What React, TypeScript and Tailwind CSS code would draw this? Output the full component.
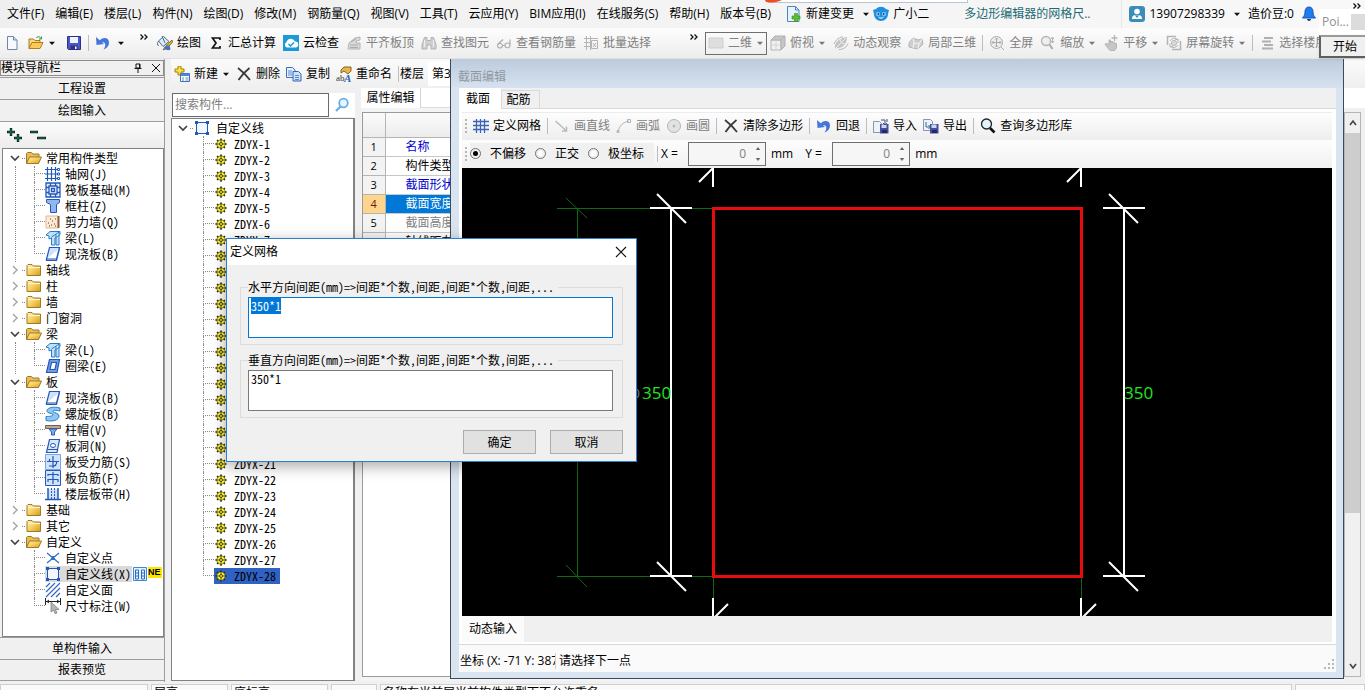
import { useEffect, useRef } from "react";
import type { ReactNode } from "react";

const UI_FONT = "font-['Open_Sans','Noto_Sans_CJK_SC',sans-serif]";
const CODE_FONT = "font-['Noto_Sans_Mono_CJK_SC','Noto_Sans_CJK_SC',monospace]";

/* ---------- icons (16 x 16) ---------- */

const G = "#b4b4b4";
const B = "#2458b8";

const icons: Record<string, ReactNode> = {
  newFile: (
    <>
      <path d="M3.500 1.500h6l3.500 3.500v9.500h-9.500z" fill="#f6faff" stroke="#6f86a8" />
      <path d="M9.500 1.500v3.500h3.500" fill="#c9d8ee" stroke="#6f86a8" />
    </>
  ),
  open: (
    <>
      <path d="M1 13.500V4h4.500l1.500 1.500h5V8" fill="#f7d77c" stroke="#a87a1c" />
      <path d="M1 13.500 4 7.500h11l-3 6z" fill="#ffc95a" stroke="#b07f1c" />
      <path d="M8 3c2-2 4-1.500 5 .5m.5-2v2.500H11" fill="none" stroke="#3c8b3c" />
    </>
  ),
  save: (
    <>
      <path d="M1.500 1.500h13v13h-12l-1-1z" fill="#4d57c4" stroke="#2b3286" />
      <path d="M4 2h8v6H4z" fill="#eef2ff" />
      <path d="M4.500 10.500h7v4h-7z" fill="#2d3380" />
      <path d="M9 11.500h1.500v2.500H9z" fill="#fff" />
    </>
  ),
  undo: (
    <>
      <path d="M4 6.500C7 1.500 14 2 14 7.500c0 3.500-2.500 6-5.500 7C10.500 12 11 8.500 9 7.500 7.500 7 6.500 7.500 6 8.500z" fill="#4676d8" />
      <path d="M1 2 1.500 10l7.500-1z" fill="#4676d8" />
    </>
  ),
  paint: (
    <>
      <path d="m1.500 6 5-4.500 5.500 5-6 5z" fill="#dfeaf7" stroke="#4a6d92" />
      <path d="M1.500 6c-1.500 2-1 4 0 5M5 1l3 7" stroke="#4a6d92" fill="none" />
      <path d="M15 5 9 10.500l-3 4.500 4.500-2L15.500 7z" fill="#e2b53d" stroke="#8a6b1c" />
      <path d="M11 10c2 1 3 3 2 5-3 .5-5-.5-6-2" fill="#3e72cf" />
    </>
  ),
  sigma: <path d="M12 5V3H4.500L8 8l-3.500 5H12v-2" fill="none" stroke="#111" strokeWidth="1.700" />,
  cloudCheck: (
    <>
      <path d="M0 0h16v16H0z" fill="#1b9ad6" />
      <path d="M4 12.500a3 3 0 0 1-.5-5.500A4.500 4.500 0 0 1 12 6.500a3 3 0 0 1 .5 6z" fill="#fff" />
      <path d="m5.500 9 2 2L11 7.500" fill="none" stroke="#1b9ad6" strokeWidth="1.500" />
    </>
  ),
  align: (
    <>
      <path d="M3 8 9 3l5-1v3l-4 1v2h4v6H2z" fill="#dadada" stroke={G} />
      <path d="M4 10h8M4 12.500h8M5 7l5-3" stroke="#aaa" />
    </>
  ),
  binoc: (
    <>
      <path d="M3.500 2.500h2.500v3h4v-3h2.500l2.500 7v4.500h-5v-4H6v4H1v-4.500z" fill="#cfcfcf" stroke="#b2b2b2" />
      <path d="M3.500 5v7M12.500 5v7" stroke="#eee" />
    </>
  ),
  glasses: (
    <path d="M7 4.500 2 9a2.500 2.500 0 1 0 4.500 1.500A2.500 2.500 0 0 0 2 9.500M6.500 10.500h2.500m5-6v6.500M9 10a2.500 2.500 0 1 0 5 .5 2.500 2.500 0 0 0-5 0" fill="none" stroke="#adadad" strokeWidth="1.200" />
  ),
  batch: (
    <path d="M1 3.500h14M1 7.500h7M1 11.500h6M3.500 1v14M7.500 1v14M8.500 5.500h6v8h-6zM10 8l3 4m0-4-3 4" fill="none" stroke={G} />
  ),
  rect2d: <path d="M1 3h14v10H1z" fill="#dedede" stroke="#cfcfcf" />,
  cube: (
    <>
      <path d="M1 5h10v10H1z" fill="#f1f1f1" stroke={G} />
      <path d="m1 5 4-4h10l-4 4zM11 5v10l4-4V1z" fill="#c6c6c6" stroke="#b0b0b0" />
      <path d="M6 5v10M1 10h10" stroke="#d2d2d2" />
    </>
  ),
  orbit: (
    <>
      <path d="M2 13C1 8 6 3 14 2c0 7-4 12-12 11z" fill="#c4c4c4" />
      <path d="M1 15 13 3M7 4c0 3 2 5 5 5" stroke="#eee" fill="none" />
      <path d="M1 9c2-5 6-7 9-7M6 14.500c5 0 8-3 9-6" stroke={G} fill="none" />
    </>
  ),
  part3d: (
    <>
      <path d="m1 8 4-5 5 2 4-1 1 5-5 5-5-1-4-1z" fill="#d0d0d0" stroke={G} />
      <path d="m5 3 1 5 5 1 3-5M6 8l-1 5m6-4-1 5" stroke="#f4f4f4" fill="none" />
    </>
  ),
  full: (
    <>
      <circle cx="7.500" cy="7.500" r="6" fill="#eee" stroke="#aaa" />
      <path d="M7.500 3v9M3 7.500h9M6 4.500 7.500 3 9 4.500M6 10.500 7.500 12 9 10.500M4.500 6 3 7.500 4.500 9M10.500 6 12 7.500 10.500 9m1.500 3 3 3" fill="none" stroke="#aaa" />
    </>
  ),
  zoomer: (
    <>
      <circle cx="6" cy="6" r="4.500" fill="#eee" stroke={G} strokeWidth="1.300" />
      <path d="m9.500 9.500 3 4.500" stroke="#aaa" strokeWidth="2" />
      <path d="M12.500 2v6m-1.500-4 1.500-2L14 4m-3 2 1.500 2L14 6" stroke={G} fill="none" />
    </>
  ),
  pan: (
    <>
      <path d="M2 9c2-1 3 0 4 1V5h1.500v3L9 6l1 2 1.500-1 .5 2 1.500-.5V13l-2 2.500H7L4 12z" fill="#c6c6c6" stroke={G} />
      <path d="M11.500 0v6M8.500 3h6" stroke={G} strokeWidth="1.300" />
    </>
  ),
  rotate: (
    <>
      <path d="M1.500 10V1.500H10M6 14.500h8.500V6" fill="none" stroke={G} strokeWidth="1.500" />
      <circle cx="8" cy="8" r="2.500" fill="#ddd" stroke={G} />
      <path d="M4 11a5 5 0 0 0 8-1M12 5a5 5 0 0 0-8 1m0 2.500V12l3-1M12 8V4L9 5" fill="none" stroke={G} />
    </>
  ),
  floors: <path d="M5 3h9M3 6.500h9M5 10h9M3 13.500h11" stroke="#b0b0b0" strokeWidth="2" />,
  newItem: (
    <>
      <path d="M4 0h3v3h3v3H7v3H4V6H1V3h3z" fill="#ffe14a" stroke="#a08200" />
      <path d="M6.500 7.500h9v8h-9z" fill="#fff" stroke="#3f6fb5" />
      <path d="M6.500 7.500h9v2.500h-9z" fill="#4f86d6" />
      <path d="M8 12h2m1.500 0h3M8 14h2m1.500 0h3" stroke="#5b88c8" />
    </>
  ),
  cross: <path d="M2 2c4 3 8 7 12 12M13.500 2C9 5.500 5.500 9.500 2.500 14" fill="none" stroke="#3a3a3a" strokeWidth="1.800" />,
  copy: (
    <>
      <path d="M.5 1.500h6l2.500 2.500v7.500h-8.500z" fill="#e6f0ff" stroke="#3f6fc0" />
      <path d="M7 5.500h5.500l2.500 2.500v7H7z" fill="#cfe1fb" stroke="#3563b5" />
      <path d="M2 5h4M2 7h4M2 9h4M9 9.500h4M9 11.500h4M9 13.500h4" stroke="#5b8ad4" />
    </>
  ),
  rename: (
    <>
      <path d="M5 4 8 1h7v4l-3 3-4-3-3 2z" fill="#e3b64f" stroke="#8a6418" />
      <text x="0" y="15" fontSize="9" fontFamily="Liberation Serif" fill="#333">ab</text>
      <text x="8" y="15.500" fontSize="11" fontFamily="Liberation Serif" fontStyle="italic" fontWeight="bold" fill="#2f62c8">A</text>
    </>
  ),
  search: (
    <>
      <circle cx="9.500" cy="6" r="4.300" fill="#e8f5ff" stroke="#6aaee6" strokeWidth="1.800" />
      <path d="m6.500 9.500-4.500 4.500" stroke="#6aaee6" strokeWidth="2.300" />
    </>
  ),
  grid: <path d="M0 3.500h16M0 7.500h16M0 11.500h16M3.500 1v14M7.500 1v14M11.500 1v14" stroke="#3a66b4" strokeWidth="1.300" />,
  axis: (
    <>
      <path d="M0 3.500h12M0 8h12M0 12.500h12M2.500 1v14M6.500 1v14M10.500 1v14" stroke={B} strokeWidth="1.200" />
      <path d="M12.500 2.500h2v2h-2zM12.500 7h2v2h-2zM12.500 11.500h2v2h-2z" fill="#fff" stroke={B} />
    </>
  ),
  line: <path d="m1.500 3 11 10m0-4.500V13H8" fill="none" stroke="#bbb" strokeWidth="1.500" />,
  arc: <path d="M2 14C3 8 7 4 13 3M11.500 1.500h3v3h-3zM1 12.500h2v2H1z" fill="none" stroke={G} />,
  circle: (
    <>
      <circle cx="8" cy="8" r="6.500" fill="#e2e2e2" stroke={G} />
      <circle cx="8" cy="8" r="1.500" fill="#bbb" />
    </>
  ),
  importIcon: (
    <>
      <path d="M.5 3.500h6l2 2v9h-8z" fill="#eef3fb" stroke="#8a93b0" />
      <path d="M7 6h8.500v9.500H7z" fill="#474f9c" />
      <path d="M8.500 6.500h5v3.500h-5z" fill="#cfd6f4" />
      <path d="M9 12h5v3H9z" fill="#222a66" />
      <path d="M8 2h4v5m-2-2 2 2 2-2M14 1v3" stroke="#444b6e" fill="none" />
    </>
  ),
  exportIcon: (
    <>
      <path d="M.5 1.500h7l2 2v9h-9z" fill="#eef3fb" stroke="#8a93b0" />
      <path d="M7 6h8.500v9.500H7z" fill="#474f9c" />
      <path d="M8.500 6.500h5v3.500h-5z" fill="#cfd6f4" />
      <path d="M9 12h5v3H9z" fill="#222a66" />
      <path d="M3 4v5h4M5.500 7l2 2-2 2" stroke="#2b6a8a" fill="none" />
    </>
  ),
  magnify: (
    <>
      <circle cx="6.500" cy="6" r="5" fill="#dff3fb" stroke="#222" strokeWidth="1.300" />
      <path d="m10 10 4.500 4.500" stroke="#111" strokeWidth="2.600" />
    </>
  ),
  change: (
    <>
      <path d="M1.500.5h8l3.500 3.500v11.500H1.500z" fill="#e6f3ff" stroke="#4b86b4" />
      <path d="M9.500.5v3.500h3.500" fill="none" stroke="#4b86b4" />
      <path d="M8.500 7.500h3v2.500H14v3h-2.500v2.500h-3v-2.500H6V10h2.500z" fill="#5cc02a" stroke="#3a8a18" strokeWidth=".6" />
    </>
  ),
  mascot: (
    <>
      <path d="M3 3c3-3 7-3 10 0l3 1-1 4c0 4-3 7-7 7s-7-3-7-7L0 4z" fill="#1e8fe0" />
      <path d="M3.500 6.500h3v3h-3zM9.500 6.500h3v3h-3z" fill="#dff2ff" />
      <path d="M4.500 7H6v2H4.500zM10 7h1.500v2H10z" fill="#0d4f8c" />
      <path d="M5.500 11c1.500 1.500 3.500 1.500 5 0" stroke="#fff" fill="none" />
    </>
  ),
  user: (
    <>
      <rect width="16" height="16" rx="3" fill="#3a8db8" />
      <circle cx="8" cy="5.500" r="2.800" fill="#fff" />
      <path d="M3 13c0-4 2-4 5-3.500 3-.5 5-.5 5 3.500z" fill="#fff" />
      <path d="m6 9.500 2 2.500 2-2.500" fill="#3a8db8" />
    </>
  ),
  bell: (
    <>
      <path d="M8 1c3 0 4 2.500 4 5 0 3 1 4 2.500 6h-13C3 10 4 9 4 6c0-2.500 1-5 4-5z" fill="#1f7cf0" stroke="#1559b8" />
      <path d="M6 13h4c0 2.500-4 2.500-4 0z" fill="#123f86" />
    </>
  ),
  folder: (
    <>
      <path d="M1 13.500v-10l1-1h4l1.500 1.500h7v9.500z" fill="url(#folderFill)" stroke="#a07a24" />
      <path d="M2 5.500h12" stroke="#fff6cf" />
    </>
  ),
  folderOpen: (
    <>
      <path d="M.5 13.500V3.500l1-1h4l1.500 1.500h6v3" fill="#e9bd50" stroke="#a07a24" />
      <path d="m.5 13.500 3-6.500h12l-3 6.500z" fill="url(#folderFill)" stroke="#a07a24" />
    </>
  ),
  raft: <path d="M1 1h14v14H1zM4 4h8v8H4zM6.500 6.500h3v3h-3zM1 5.500h3m8 0h3m-14 5h3m8 0h3M5.500 1v3m5-3v3m-5 8v3m5-3v3" fill="#e8f1ff" stroke={B} strokeWidth="1.300" />,
  column: <path d="M1.500 1.500h13v3l-3 2v8h-6v-8l-4-2z" fill="#8fb8f0" stroke={B} />,
  wall: (
    <>
      <path d="M1 2h12v12H1z" fill="#fde9d4" stroke="#e6b68c" />
      <path d="M12.500 2h2v12h-2z" fill="#8a6040" />
      <path d="M3 9h1m2 2h1m2-1h1m0 2h1M4 12h1m2-5h1m-3-2h1m4 0h1" stroke="#553f33" />
    </>
  ),
  beam: <path d="M1 5 5 1.500h10v3L10 8v7H6.500V8L4 9V6zM15 1.500 6.500 7M11 4v11h3V3" fill="#bfe0fb" stroke="#2a7cc4" />,
  slab: <path d="M4.500 1.500h10l-3 11.500h-10z M1.500 13v1.500h10l3-12" fill="#cfe2fc" stroke={B} strokeWidth="1.200" />,
  ring: <path d="M4.500 1.500h10L12 14.500H1.500zM6.500 4.500h5l-1.500 7H5z" fill="#6f9fe6" fillRule="evenodd" stroke={B} strokeWidth="1.200" />,
  spiral: <path d="M15 2C8 0 1 2 2 5.500c.5 2 5 1.500 6 3 .5 1.500-3 2-7 2v4c7 1.500 13-.5 13-4.500 0-3-5-3-6-4.500C8 4 11 4 15 5z" fill="#8ec7f3" stroke="#2a7cc4" />,
  cap: (
    <>
      <path d="M.5 3.500h15v3H.5z" fill="#bca98e" stroke="#6d6152" />
      <path d="M4 7h8l-2.500 3v3h-3v-3z" fill="#7fb0ee" stroke={B} />
    </>
  ),
  hole: (
    <>
      <path d="M4.500 1.500h10l-2.500 13H1.500z" fill="#d7e7fd" stroke={B} strokeWidth="1.200" />
      <ellipse cx="8" cy="7.500" rx="2.500" ry="2" fill="#fff" stroke={B} />
      <path d="M2.500 11.500h10" stroke={B} />
    </>
  ),
  rebarS: (
    <>
      <path d="M.5.5h15v15H.5z" fill="#d0e3fb" stroke="#7fa6dc" />
      <path d="M8 2v12M2 7.500h12M4.500 5v2.500M11.500 7.500V10M4 12h4c2 0 3-1 3-2" fill="none" stroke={B} strokeWidth="1.200" />
    </>
  ),
  rebarF: (
    <>
      <path d="M.5.5h15v15H.5z" fill="#d0e3fb" stroke={B} />
      <path d="M8 2v12M3 6V4.500h10V6M3 12v-2.500h10V12" fill="none" stroke={B} strokeWidth="1.200" />
    </>
  ),
  strip: (
    <>
      <path d="M3 3h10v10H3z" fill="#cfe2fb" />
      <path d="M0 13.500h16M3 2v11m10-11v11" fill="none" stroke={B} strokeWidth="1.500" />
      <path d="M6.500 2v11m3-11v11" stroke={B} strokeDasharray="2 1" />
    </>
  ),
  point: <path d="m2 3 12 10M14 3 2 13M6.500 6.500h3v3h-3z" fill="none" stroke="#2f6fc0" strokeWidth="1.200" />,
  lineSeg: (
    <>
      <path d="M2.500 2.500h11v11h-11z" fill="#f2f7ff" stroke={B} />
      <path d="M1 1h3v3H1zM12 1h3v3h-3zM1 12h3v3H1zM12 12h3v3h-3z" fill={B} />
    </>
  ),
  area: <path d="M1 5 5 1M1 10l9-9M1 15 15 1M6 15l9-9m-4 9 4-4" stroke="#3468c4" strokeWidth="1.200" />,
  dim: (
    <>
      <path d="M0 3.500h16M.5 0v7m15-7v7M4 2 2 3.500 4 5m8-3 2 1.500L12 5" stroke="#222" fill="none" />
      <path d="m6 4 8 7.500H10.500L12 15l-2 .5-1.500-3.500L6 14z" fill="#b5b5b5" stroke="#777" strokeWidth=".7" />
    </>
  ),
  gear: (
    <>
      <path d="M8 .5v15M.5 8h15M2.800 2.800l10.400 10.400M13.200 2.800 2.800 13.200" stroke="#2c2c00" strokeWidth="2.200" />
      <circle cx="8" cy="8" r="5.500" fill="#fff83a" stroke="#4a4700" />
      <path d="M8 3v3M8 10v3M3 8h3M10 8h3" stroke="#4a4700" strokeWidth="1.200" />
      <circle cx="8" cy="8" r="2" fill="#fff83a" stroke="#222" strokeWidth="1.200" />
    </>
  ),
  book: (
    <>
      <path d="M1.500 1.500h13v13h-13z" fill="#e3f1ff" stroke="#3a8ad8" />
      <path d="M3.500 4h3v9h-3zM9.500 4h3v9h-3zM3 7h4m2 0h4M3 10h4m2 0h4" fill="none" stroke="#2a6cc0" />
    </>
  ),
};

function Icon({ name, small }: { name: string; small?: boolean }) {
  return (
    <svg viewBox="0 0 16 16" aria-hidden="true" className={small ? "h-3 w-3 shrink-0" : "h-4 w-4 shrink-0"}>
      {icons[name]}
    </svg>
  );
}

function Caret({ muted }: { muted?: boolean }) {
  return (
    <svg viewBox="0 0 8 8" aria-hidden="true" className="h-2 w-2 shrink-0">
      <path d="M1 2.800h6L4 6z" fill={muted ? "#777" : "#111"} />
    </svg>
  );
}

function Tool({ icon, label, muted, caret }: { icon: string; label: string; muted?: boolean; caret?: boolean }) {
  return (
    <button className={`flex shrink-0 items-center gap-1 whitespace-nowrap ${muted ? "text-[#808080]" : "text-black"}`}>
      <Icon name={icon} />
      {label}
      {caret && <Caret muted={muted} />}
    </button>
  );
}

function Sep({ tight }: { tight?: boolean }) {
  return <span className={`h-4 w-px shrink-0 bg-[#bdbdbd] ${tight ? "-mx-px" : ""}`} />;
}

function More() {
  return (
    <svg viewBox="0 0 8 6" aria-hidden="true" className="h-[6px] w-2 shrink-0">
      <path d="m.5.5 2.500 2.500-2.500 2.500M4.500.5 7 3 4.500 5.500" fill="none" stroke="#111" strokeWidth="1.300" />
    </svg>
  );
}

/* ---------- top bars ---------- */

const menus = [
  "文件(F)", "编辑(E)", "楼层(L)", "构件(N)", "绘图(D)", "修改(M)", "钢筋量(Q)", "视图(V)",
  "工具(T)", "云应用(Y)", "BIM应用(I)", "在线服务(S)", "帮助(H)", "版本号(B)",
];

function MenuBar() {
  return (
    <nav className="relative flex h-7 shrink-0 items-center gap-[11px] overflow-hidden bg-gradient-to-r from-[#efefef] to-[#f8f8f8] pl-[7px] whitespace-nowrap">
      <div className="absolute top-0 left-[768px] h-[3px] w-[200px] border-r border-b border-[#b9c4d4] bg-white" />
      <svg className="absolute top-0 left-[764px] h-[3px] w-[18px]" aria-hidden="true">
        <path d="M1 0h17c-4 2-9 3-16 2z" fill="#f04e1c" />
      </svg>
      {menus.map((m) => (
        <button key={m} className="shrink-0">{m}</button>
      ))}
      <button className="ml-1 flex shrink-0 items-center gap-1">
        <Icon name="change" />
        新建变更
        <span className="ml-1 flex"><Caret /></span>
      </button>
      <button className="-ml-2 flex shrink-0 items-center gap-1">
        <Icon name="mascot" />
        广小二
      </button>
      <a href="#help" className="ml-6 shrink-0 text-[#1d6a73]">多边形编辑器的网格尺..</a>
      <span className="ml-5 h-full w-px shrink-0 bg-[#e4e8ec]" />
      <button className="-ml-1 flex shrink-0 items-center gap-1">
        <Icon name="user" />
        13907298339
        <span className="ml-1 flex"><Caret /></span>
      </button>
      <span className="-ml-1 shrink-0">造价豆:0</span>
      <button aria-label="消息" className="-ml-1 flex shrink-0"><Icon name="bell" /></button>
    </nav>
  );
}

function MainToolbar() {
  return (
    <div className="flex h-[31px] shrink-0 items-center gap-[7px] overflow-hidden border-b border-[#e2e2e2] bg-gradient-to-b from-[#fdfdfd] to-[#ededed] pl-1 whitespace-nowrap">
      <div className="flex w-[146px] shrink-0 items-center">
        <button aria-label="新建" className="mr-2"><Icon name="newFile" /></button>
        <button aria-label="打开" className="mr-[10px] flex items-center gap-1"><Icon name="open" /><Caret /></button>
        <button aria-label="保存" className="mr-[6px]"><Icon name="save" /></button>
        <Sep />
        <button aria-label="撤销" className="ml-[6px] flex items-center gap-[6px]"><Icon name="undo" /><Caret /></button>
        <span className="mr-[2px] mb-3 ml-auto"><More /></span>
      </div>
      <Tool icon="paint" label="绘图" />
      <Tool icon="sigma" label="汇总计算" />
      <Tool icon="cloudCheck" label="云检查" />
      <Tool icon="align" label="平齐板顶" muted />
      <Tool icon="binoc" label="查找图元" muted />
      <Tool icon="glasses" label="查看钢筋量" muted />
      <Tool icon="batch" label="批量选择" muted />
      <span className="mb-3 ml-8 flex w-2 shrink-0"><More /></span>
      <button className="flex h-[23px] w-[62px] shrink-0 items-center gap-1 border border-[#6f6f6f] pl-[2px] text-[#808080]">
        <Icon name="rect2d" />
        二维
        <Caret muted />
      </button>
      <div className="-ml-1 flex items-center gap-[7px]">
        <Tool icon="cube" label="俯视" muted caret />
        <Tool icon="orbit" label="动态观察" muted />
        <Tool icon="part3d" label="局部三维" muted />
        <Sep tight />
        <Tool icon="full" label="全屏" muted />
        <Tool icon="zoomer" label="缩放" muted caret />
        <Tool icon="pan" label="平移" muted caret />
        <Tool icon="rotate" label="屏幕旋转" muted caret />
        <Sep tight />
        <Tool icon="floors" label="选择楼层" muted />
      </div>
    </div>
  );
}

/* ---------- navigation tree ---------- */

type Leaf = { icon: string; label: string; active?: boolean };
type Branch = { label: string; children?: Leaf[] };

const tree: Branch[] = [
  {
    label: "常用构件类型",
    children: [
      { icon: "axis", label: "轴网(J)" },
      { icon: "raft", label: "筏板基础(M)" },
      { icon: "column", label: "框柱(Z)" },
      { icon: "wall", label: "剪力墙(Q)" },
      { icon: "beam", label: "梁(L)" },
      { icon: "slab", label: "现浇板(B)" },
    ],
  },
  { label: "轴线" },
  { label: "柱" },
  { label: "墙" },
  { label: "门窗洞" },
  { label: "梁", children: [{ icon: "beam", label: "梁(L)" }, { icon: "ring", label: "圈梁(E)" }] },
  {
    label: "板",
    children: [
      { icon: "slab", label: "现浇板(B)" },
      { icon: "spiral", label: "螺旋板(B)" },
      { icon: "cap", label: "柱帽(V)" },
      { icon: "hole", label: "板洞(N)" },
      { icon: "rebarS", label: "板受力筋(S)" },
      { icon: "rebarF", label: "板负筋(F)" },
      { icon: "strip", label: "楼层板带(H)" },
    ],
  },
  { label: "基础" },
  { label: "其它" },
  {
    label: "自定义",
    children: [
      { icon: "point", label: "自定义点" },
      { icon: "lineSeg", label: "自定义线(X)", active: true },
      { icon: "area", label: "自定义面" },
      { icon: "dim", label: "尺寸标注(W)" },
    ],
  },
];

function Chevron({ open }: { open: boolean }) {
  return (
    <svg viewBox="0 0 12 12" aria-hidden="true" className="h-3 w-3 shrink-0">
      {open ? (
        <path d="m2 4 4 4 4-4" fill="none" stroke="#404040" strokeWidth="1.600" />
      ) : (
        <path d="m4 2 4 4-4 4" fill="none" stroke="#a0a0a0" strokeWidth="1.300" />
      )}
    </svg>
  );
}

function Connector({ last }: { last: boolean }) {
  return (
    <span className="flex w-[11px] shrink-0 flex-col self-stretch">
      <span className="h-2 border-b border-l border-dotted border-[#8a8a8a]" />
      {!last && <span className="h-2 border-l border-dotted border-[#8a8a8a]" />}
    </span>
  );
}

function NavPanel() {
  const bar = "h-[22px] shrink-0 border-t border-[#9c9c9c] bg-[#f0f0f0] text-center";
  return (
    <aside className="flex w-[165px] shrink-0 flex-col border-r border-[#9c9c9c] bg-[#f0f0f0] pt-px pb-px">
      <header className="mb-px flex h-4 shrink-0 items-center border border-[#8c8c8c] leading-3">
        <span>模块导航栏</span>
        <button aria-label="固定" className="ml-auto flex">
          <svg viewBox="0 0 10 10" className="h-[10px] w-[10px]" aria-hidden="true">
            <path d="M3 1h4v4H3zM1.500 5.500h7M5 5.500V10M6.500 1v4" fill="none" stroke="#111" />
          </svg>
        </button>
        <button aria-label="关闭" className="mr-[2px] ml-2 flex">
          <svg viewBox="0 0 10 10" className="h-[10px] w-[10px]" aria-hidden="true">
            <path d="m1 1 8 8M9 1 1 9" stroke="#111" />
          </svg>
        </button>
      </header>
      <button className={bar}>工程设置</button>
      <button className={bar}>绘图输入</button>
      <div className="flex h-[27px] shrink-0 items-center gap-[6px] border-t border-[#9c9c9c] bg-gradient-to-b from-[#fbfbfb] to-[#ededed] pl-[6px]">
        <button aria-label="全部展开" className="flex">
          <svg viewBox="0 0 18 16" className="h-4 w-[18px]" aria-hidden="true">
            <path d="M5 1v8M1 5h8M12 7v8M8 11h8" stroke="#0b2b1c" strokeWidth="2.400" />
            <path d="M5 2v6M2 5h6M12 8v6M9 11h6" stroke="#1f8a5c" strokeWidth=".7" />
          </svg>
        </button>
        <button aria-label="全部折叠" className="flex">
          <svg viewBox="0 0 18 16" className="h-4 w-[18px]" aria-hidden="true">
            <path d="M0 5h8M7 11h9" stroke="#0b2b1c" strokeWidth="2.400" />
            <path d="M1 5h6M8 11h7" stroke="#1f8a5c" strokeWidth=".7" />
          </svg>
        </button>
      </div>
      <ul className={`ml-[2px] min-h-0 flex-1 overflow-hidden border border-[#828282] bg-white pt-px ${CODE_FONT}`}>
        {tree.map((b, i) => (
          <li key={b.label}>
            <button className="flex h-4 items-center pl-[6px] leading-4">
              <Chevron open={!!b.children} />
              <span className="mx-px w-[3px] border-b border-dotted border-[#8a8a8a]" />
              <Icon name={b.children ? "folderOpen" : "folder"} />
              <span className="pl-1">{b.label}</span>
            </button>
            {b.children && (
              <ul className={i < tree.length - 1 ? "ml-3 border-l border-dotted border-[#8a8a8a]" : "ml-[13px]"}>
                {b.children.map((c, k) => (
                  <li key={c.label} className="flex h-4 items-center pl-[18px] leading-4 whitespace-nowrap">
                    <Connector last={k === b.children!.length - 1} />
                    <button className={c.active ? "flex items-center bg-[#dadada] pr-px" : "flex items-center"}>
                      <Icon name={c.icon} />
                      <span className="pl-1">{c.label}</span>
                    </button>
                    {c.active && (
                      <>
                        <Icon name="book" />
                        <span className="mb-1 w-[14px] shrink-0 overflow-hidden bg-[#ffe600] font-['Liberation_Sans',sans-serif] text-[9px] leading-[11px] font-bold">NE</span>
                      </>
                    )}
                  </li>
                ))}
              </ul>
            )}
          </li>
        ))}
      </ul>
      <button className={bar}>单构件输入</button>
      <button className={`${bar} border-b`}>报表预览</button>
    </aside>
  );
}

/* ---------- component list and properties ---------- */

const members = Array.from({ length: 28 }, (_, i) => `ZDYX-${i + 1}`);

function MemberPanel() {
  return (
    <section className="flex w-[184px] shrink-0 flex-col">
      <div className="flex h-[30px] shrink-0 items-center pt-[3px] pl-px">
        <input
          aria-label="搜索构件"
          placeholder="搜索构件..."
          className="h-[24px] w-[157px] border border-[#6b6b6b] bg-white px-[2px] text-xs outline-none placeholder:text-[#808080]"
        />
        <button aria-label="搜索" className="flex h-[24px] flex-1 items-center justify-center bg-white"><Icon name="search" /></button>
      </div>
      <div className={`min-h-0 flex-1 overflow-hidden border border-r-2 border-[#828282] bg-white pt-px ${CODE_FONT}`}>
        <div className="flex h-4 items-center pl-[5px] leading-4">
          <Chevron open />
          <span className="mx-px w-[3px] border-b border-dotted border-[#8a8a8a]" />
          <Icon name="lineSeg" />
          <span className="pl-[6px]">自定义线</span>
        </div>
        <ul className="pl-[31px]">
          {members.map((m, i) => (
            <li key={m} className="flex h-4 items-center leading-4">
              <Connector last={i === members.length - 1} />
              <button className={`flex h-4 items-center pr-1 pl-px ${i === members.length - 1 ? "bg-[#2f62c4]" : ""}`}>
                <Icon name="gear" small />
                <span className="pl-[7px]">{m}</span>
              </button>
            </li>
          ))}
        </ul>
      </div>
    </section>
  );
}

const props = [
  { label: "名称", tone: "text-[#0000d0]" },
  { label: "构件类型", tone: "text-black" },
  { label: "截面形状", tone: "text-[#0000d0]" },
  { label: "截面宽度", tone: "text-white", active: true },
  { label: "截面高度", tone: "text-[#808080]" },
  { label: "轴线距左", tone: "text-black" },
];

function PropertyPanel() {
  return (
    <section className="flex min-w-0 flex-1 flex-col bg-[#f4f4f4]">
      <div className="flex h-5 shrink-0 border-b border-[#dcdcdc] bg-white">
        <button className="-mb-px w-[60px] border-r border-[#d5d5d5] bg-white text-center">属性编辑</button>
      </div>
      <div className="mt-1 mb-1 ml-px min-h-0 flex-1 overflow-hidden border border-[#9a9a9a] bg-white">
        <table className="w-full border-collapse text-left">
          <thead>
            <tr className="h-6 bg-gradient-to-b from-[#fbfbfb] to-[#ececec]">
              <th className="w-[22px] border-r border-b border-[#b5b5b5]" />
              <th className="border-b border-[#b5b5b5]" />
            </tr>
          </thead>
          <tbody>
            {props.map((p, i) => (
              <tr key={p.label} className="h-[19px] leading-4">
                <td className={`border-r border-b border-[#b5b5b5] p-0 text-center text-[11px] ${p.active ? "bg-[#ffd58c] text-[#7a1010]" : "bg-[#f3f3f3]"}`}>{i + 1}</td>
                <td className={`border-b border-[#c8c8c8] p-0 pl-5 ${p.tone} ${p.active ? "bg-[#0078d7]" : ""}`}>{p.label}</td>
              </tr>
            ))}
          </tbody>
        </table>
      </div>
    </section>
  );
}

/* ---------- section editor ---------- */

function Spin({ id, label }: { id: string; label: string }) {
  return (
    <div className="flex items-center">
      <label htmlFor={id} className="w-[27px]">{label} =</label>
      <div className="flex h-[24px] w-[78px] items-center border border-[#6f6f6f] bg-[#f6f6f6]">
        <input id={id} defaultValue="0" className="min-w-0 flex-1 bg-transparent text-right text-xs text-[#808080] outline-none" />
        <div className="mr-[3px] ml-2 flex w-2 flex-col items-center gap-2">
          <button aria-label={`${label} 增加`}>
            <svg viewBox="0 0 6 4" className="block h-[3px] w-[6px]" aria-hidden="true"><path d="M0 4 3 0l3 4z" fill="#666" /></svg>
          </button>
          <button aria-label={`${label} 减少`}>
            <svg viewBox="0 0 6 4" className="block h-[3px] w-[6px]" aria-hidden="true"><path d="m0 0 3 4 3-4z" fill="#666" /></svg>
          </button>
        </div>
      </div>
      <span className="pl-[5px]">mm</span>
    </div>
  );
}

function OffsetOption({ id, label, checked }: { id: string; label: string; checked?: boolean }) {
  return (
    <div className="flex items-center gap-[9px]">
      <input
        type="radio"
        id={id}
        name="offset"
        defaultChecked={checked}
        className="h-[11px] w-[11px] appearance-none rounded-full border border-[#707070] bg-white bg-clip-content p-[2px] checked:bg-black"
      />
      <label htmlFor={id}>{label}</label>
    </div>
  );
}

const Grip = () => <span className="h-[14px] w-[2px] shrink-0 border-l-2 border-dotted border-[#b5b5b5]" />;

function Drawing() {
  return (
    <svg className="block h-full w-full bg-black" role="img" aria-label="截面图">
      <g transform="translate(-462 -168)" fill="none">
        <g stroke="#0c6b12" strokeWidth="1">
          <path d="M557 208.500h156M557 576.500h156M577.500 208v368M713.500 578v22M1081.500 578v22M566 198l21 20M566 565l21 22" />
        </g>
        <g stroke="#fff" strokeWidth="2">
          <path d="M671 208v368M650 208h42M657 194l29 29M650 576h42M657 562l29 29" />
          <path d="M1124 208v368M1103 208h42M1109 194l29 29M1103 576h42M1109 562l29 29" />
          <path d="M713 187v-19l-14 14M1081 187v-19l-14 14M713 598v20M728 604l-14 14M1081 598v20M1096 604l-14 14" />
        </g>
        <path d="M713.500 208.500h368v368h-368z" stroke="#e80c0c" strokeWidth="3" />
        <g fill="#22e622" fontFamily="Open Sans, sans-serif" fontSize="17">
          <text x="642" y="399">350</text>
          <text x="1124" y="399">350</text>
          <text x="640" y="398" textAnchor="end" fontSize="13" fill="#7f92a8">0</text>
        </g>
      </g>
    </svg>
  );
}

function SectionEditor() {
  return (
    <section className="absolute top-[59px] right-[21px] bottom-[11px] left-[450px] flex flex-col border border-t-0 border-[#3f4a58] bg-[#d9e4f1] pr-[7px] pb-[6px] pl-2">
      <h2 className="-mr-[7px] -ml-2 flex h-[29px] shrink-0 items-center bg-gradient-to-b from-[#bccbdc] to-[#d6e2f0] pt-[6px] pl-[7px] text-[#8f979f]">截面编辑</h2>
      <div className="flex min-h-0 flex-1 flex-col bg-white">
        <div className="flex h-[21px] shrink-0 items-end border-b border-[#d9d9d9] bg-[#f0f0f0]">
          <button className="-mb-px h-[21px] w-[42px] bg-white pr-1">截面</button>
          <button className="h-[18px] w-[39px] border border-b-0 border-[#d9d9d9] pr-1">配筋</button>
        </div>
        <div className="mt-[3px] mr-1 ml-[3px] flex min-h-0 flex-1 flex-col">
          <div className="flex h-7 shrink-0 items-center gap-[6px] border-t border-[#ececec] bg-gradient-to-b from-[#fdfdfd] to-[#eeeeee] pb-px pl-[3px]">
            <Grip />
            <Tool icon="grid" label="定义网格" />
            <Sep />
            <Tool icon="line" label="画直线" muted />
            <Tool icon="arc" label="画弧" muted />
            <Tool icon="circle" label="画圆" muted />
            <Sep />
            <Tool icon="cross" label="清除多边形" />
            <Sep />
            <Tool icon="undo" label="回退" />
            <Sep />
            <Tool icon="importIcon" label="导入" />
            <Tool icon="exportIcon" label="导出" />
            <Sep />
            <Tool icon="magnify" label="查询多边形库" />
          </div>
          <div className="flex h-7 shrink-0 items-center gap-[3px] bg-gradient-to-b from-[#fdfdfd] to-[#f1f1f1] pb-px pl-[3px]">
            <Grip />
            <div className="flex h-[22px] w-[184px] items-center gap-[9px] bg-[#f0f0f0]">
              <OffsetOption id="off-none" label="不偏移" checked />
              <OffsetOption id="off-ortho" label="正交" />
              <OffsetOption id="off-polar" label="极坐标" />
            </div>
            <Sep />
            <div className="flex items-center gap-3">
              <Spin id="offset-x" label="X" />
              <Spin id="offset-y" label="Y" />
            </div>
          </div>
          <div className="min-h-0 flex-1 overflow-hidden">
            <Drawing />
          </div>
          <div className="flex h-[26px] shrink-0 bg-[#f0f0f0]">
            <button className="w-[62px] bg-[#fbfbfb]">动态输入</button>
          </div>
        </div>
        <footer className="mt-[2px] flex h-7 shrink-0 items-center border-t border-[#d9d9d9] bg-[#fafafa] pt-1 whitespace-nowrap">
          <span className="w-[97px] shrink-0 overflow-hidden border-r border-[#cfcfcf] pl-px">坐标 (X: -71 Y: 387</span>
          <span className="pl-[3px]">请选择下一点</span>
          <svg viewBox="0 0 12 12" className="mt-2 ml-auto h-3 w-3" aria-hidden="true">
            <path d="M8 0h2v2H8zM4 4h2v2H4zM8 4h2v2H8zM0 8h2v2H0zM4 8h2v2H4zM8 8h2v2H8z" fill="#b8b8b8" />
          </svg>
        </footer>
      </div>
    </section>
  );
}

/* ---------- grid dialog ---------- */

function GridDialog() {
  const first = useRef<HTMLTextAreaElement>(null);
  useEffect(() => {
    first.current?.focus();
    first.current?.select();
  }, []);
  const area =
    "mt-[2px] block h-[41px] w-full resize-none border bg-white px-[2px] py-[2px] text-xs leading-3 outline-none selection:bg-[#0078d7] selection:text-white";
  const button = "h-6 w-[73px] border border-[#adadad] bg-[#e1e1e1] text-center";
  return (
    <div role="dialog" aria-label="定义网格" className="absolute top-[238px] left-[226px] flex w-[411px] flex-col border border-[#2a7fd0] bg-[#f0f0f0] shadow-[0_4px_14px_rgba(0,0,0,0.35)]">
      <header className="flex h-[26px] items-center bg-white pr-[9px] pl-[3px]">
        <h3>定义网格</h3>
        <button aria-label="关闭" className="ml-auto">
          <svg viewBox="0 0 12 12" className="block h-3 w-3" aria-hidden="true">
            <path d="m1 1 10 10M11 1 1 11" stroke="#111" strokeWidth="1.100" />
          </svg>
        </button>
      </header>
      <form className={`flex flex-col pt-[14px] pr-[13px] pb-[7px] pl-[13px] ${CODE_FONT}`} onSubmit={(e) => e.preventDefault()}>
        {["水平方向", "垂直方向"].map((dir, i) => (
          <fieldset key={dir} className="mb-[7px] h-[66px] border border-[#dcdcdc] pr-[9px] pl-[7px]">
            <legend className="pr-1 leading-4 whitespace-nowrap">
              <label htmlFor={`grid-${i}`}>{dir}间距(mm)=&gt;间距*个数,间距,间距*个数,间距,...</label>
            </legend>
            <textarea
              id={`grid-${i}`}
              ref={i === 0 ? first : undefined}
              defaultValue="350*1"
              className={`${area} ${i === 0 ? "border-[#0078d7]" : "border-[#7a7a7a]"}`}
            />
          </fieldset>
        ))}
        <div className="mt-[5px] flex justify-end gap-[14px]">
          <button className={button}>确定</button>
          <button type="button" className={button}>取消</button>
        </div>
      </form>
    </div>
  );
}

/* ---------- page ---------- */

export default function App() {
  return (
    <div className={`relative flex h-screen flex-col overflow-hidden bg-[#f0f0f0] text-xs leading-4 text-black ${UI_FONT}`}>
      <svg className="absolute h-0 w-0" aria-hidden="true">
        <defs>
          <linearGradient id="folderFill" x1="0" y1="0" x2="1" y2="1">
            <stop offset="0" stopColor="#fff2b4" />
            <stop offset="0.500" stopColor="#f6ce60" />
            <stop offset="1" stopColor="#d09a24" />
          </linearGradient>
        </defs>
      </svg>
      <MenuBar />
      <MainToolbar />
      <main className="flex min-h-0 flex-1 gap-[6px]">
        <NavPanel />
        <div className="flex min-w-0 flex-1 flex-col">
          <div className="flex h-[29px] shrink-0 items-center gap-[6px] bg-gradient-to-b from-[#fbfbfb] to-[#efefef] pl-[3px] whitespace-nowrap">
            <Tool icon="newItem" label="新建" caret />
            <Tool icon="cross" label="删除" />
            <Tool icon="copy" label="复制" />
            <Tool icon="rename" label="重命名" />
            <Sep />
            <div className="-ml-[5px] flex items-center gap-1">
              <span>楼层</span>
              <span className="bg-white px-1 leading-6">第3层</span>
            </div>
          </div>
          <div className="flex min-h-0 flex-1 gap-[6px] pb-px">
            <MemberPanel />
            <PropertyPanel />
            <div className="-ml-[6px] flex w-[21px] shrink-0 flex-col">
              <div className="h-5 bg-white" />
              <div className="mt-1 mr-1 mb-1 flex min-h-0 flex-1 flex-col items-center border border-[#b5b5b5] bg-[#f0f0f0]">
                <button aria-label="向上滚动" className="h-5"><svg viewBox="0 0 8 8" className="h-2 w-2" aria-hidden="true"><path d="m1 6 3-4 3 4" fill="none" stroke="#444" strokeWidth="1.600" /></svg></button>
                <div className="w-full flex-[8] bg-[#cdcdcd]" />
                <div className="flex-[3]" />
                <button aria-label="向下滚动" className="h-5"><svg viewBox="0 0 8 8" className="h-2 w-2" aria-hidden="true"><path d="m1 2 3 4 3-4" fill="none" stroke="#444" strokeWidth="1.600" /></svg></button>
              </div>
            </div>
          </div>
        </div>
      </main>
      <footer className="flex h-[8px] shrink-0 gap-[3px] overflow-hidden bg-[#f0f0f0] pt-[2px] leading-4 whitespace-nowrap [&>span]:h-5 [&>span]:shrink-0 [&>span]:border [&>span]:border-[#cfcfcf] [&>span]:bg-[#fafafa] [&>span]:pl-[2px]">
        <span className="w-[148px]" />
        <span className="w-[77px]">层高:</span>
        <span className="w-[97px]">底标高:</span>
        <span className="w-[46px]" />
        <span className="grow">名称在当前层当前构件类型下不允许重名</span>
        <span className="w-[70px]" />
      </footer>
      <SectionEditor />
      <GridDialog />
      <div className="absolute top-0 right-0 flex w-[46px] flex-col">
        <span className="flex h-[9px] items-end justify-end pr-1"><More /></span>
        <div className="flex h-[26px] items-center bg-white pl-[3px] text-[#8f8f8f]">
          Poi...
          <span className="ml-auto h-4 w-[14px] bg-[#dcdcdc]" />
        </div>
        <button className="h-[23px] border-2 border-r-0 border-[#5f5f5f] border-t-[#9a9a9a] bg-[#f0f0f0] pl-1 text-center leading-4 shadow">开始</button>
      </div>
    </div>
  );
}
